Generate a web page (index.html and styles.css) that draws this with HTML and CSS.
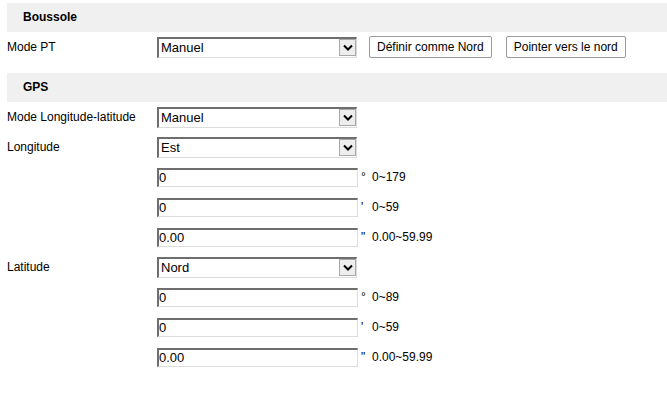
FILE: index.html
```html
<!DOCTYPE html>
<html lang="fr">
<head>
    <meta charset="UTF-8">
    <title>Boussole / GPS</title>
    <link rel="stylesheet" href="styles.css">
</head>
<body>
    <div class="section-title">Boussole</div>
    <div class="row">
        <label class="label">Mode PT</label>
        <span class="select-wrap">
            <select class="select"><option>Manuel</option></select>
            <span class="arrow"><svg width="10" height="7" viewBox="0 0 10 7"><path d="M1 1.5 L5 5.5 L9 1.5" fill="none" stroke="#000" stroke-width="2"/></svg></span>
        </span>
        <button class="btn btn-first">Définir comme Nord</button>
        <button class="btn">Pointer vers le nord</button>
    </div>

    <div class="section-title gap">GPS</div>
    <div class="row">
        <label class="label">Mode Longitude-latitude</label>
        <span class="select-wrap">
            <select class="select"><option>Manuel</option></select>
            <span class="arrow"><svg width="10" height="7" viewBox="0 0 10 7"><path d="M1 1.5 L5 5.5 L9 1.5" fill="none" stroke="#000" stroke-width="2"/></svg></span>
        </span>
    </div>
    <div class="row">
        <label class="label">Longitude</label>
        <span class="select-wrap">
            <select class="select"><option>Est</option></select>
            <span class="arrow"><svg width="10" height="7" viewBox="0 0 10 7"><path d="M1 1.5 L5 5.5 L9 1.5" fill="none" stroke="#000" stroke-width="2"/></svg></span>
        </span>
    </div>
    <div class="row">
        <span class="label"></span>
        <input class="text" type="text" value="0">
        <span class="unit">°</span><span class="range">0~179</span>
    </div>
    <div class="row">
        <span class="label"></span>
        <input class="text" type="text" value="0">
        <span class="unit">'</span><span class="range">0~59</span>
    </div>
    <div class="row">
        <span class="label"></span>
        <input class="text" type="text" value="0.00">
        <span class="unit">"</span><span class="range">0.00~59.99</span>
    </div>
    <div class="row">
        <label class="label">Latitude</label>
        <span class="select-wrap">
            <select class="select"><option>Nord</option></select>
            <span class="arrow"><svg width="10" height="7" viewBox="0 0 10 7"><path d="M1 1.5 L5 5.5 L9 1.5" fill="none" stroke="#000" stroke-width="2"/></svg></span>
        </span>
    </div>
    <div class="row">
        <span class="label"></span>
        <input class="text" type="text" value="0">
        <span class="unit">°</span><span class="range">0~89</span>
    </div>
    <div class="row">
        <span class="label"></span>
        <input class="text" type="text" value="0">
        <span class="unit">'</span><span class="range">0~59</span>
    </div>
    <div class="row">
        <span class="label"></span>
        <input class="text" type="text" value="0.00">
        <span class="unit">"</span><span class="range">0.00~59.99</span>
    </div>
</body>
</html>
```

FILE: styles.css
```css
body {
    margin: 0;
    padding: 3px 0 0 7px;
    font-family: "Liberation Sans", Arial, sans-serif;
    font-size: 12px;
    color: #000;
    background-color: #fff;
}

.section-title {
    height: 29px;
    line-height: 29px;
    padding-left: 16px;
    background-color: #f0f0f0;
    font-weight: bold;
}

.section-title.gap {
    margin-top: 11px;
}

.row {
    display: flex;
    align-items: center;
    height: 30px;
}

.label {
    width: 150px;
    flex-shrink: 0;
}

.select-wrap {
    position: relative;
    display: inline-block;
    width: 200px;
    height: 21px;
}

.select {
    appearance: none;
    -webkit-appearance: none;
    box-sizing: border-box;
    width: 200px;
    height: 21px;
    margin: 0;
    padding: 0 0 0 2px;
    font-family: "Liberation Sans", Arial, sans-serif;
    font-size: 13px;
    color: #000;
    background-color: #fff;
    border-top: 2px solid #6e6e6e;
    border-left: 2px solid #6e6e6e;
    border-right: 1px solid #dcdcdc;
    border-bottom: 1px solid #dcdcdc;
    border-radius: 0;
    outline: none;
}

.arrow {
    position: absolute;
    right: 1px;
    top: 2px;
    box-sizing: border-box;
    width: 17px;
    height: 17px;
    background-color: #ededed;
    border: 1px solid #a8a8a8;
    display: flex;
    align-items: center;
    justify-content: center;
    pointer-events: none;
}

.btn {
    box-sizing: border-box;
    height: 22px;
    margin: 0 0 0 14px;
    padding: 0 7px;
    font-family: "Liberation Sans", Arial, sans-serif;
    font-size: 12px;
    color: #000;
    background-color: #fff;
    border: 1px solid #9a9a9a;
    border-radius: 2px;
}

.btn.btn-first {
    margin-left: 12px;
}

.text {
    box-sizing: border-box;
    width: 201px;
    height: 19px;
    margin: 0;
    padding: 0;
    font-family: "Liberation Sans", Arial, sans-serif;
    font-size: 13px;
    color: #000;
    border-top: 2px solid #6e6e6e;
    border-left: 2px solid #6e6e6e;
    border-right: 1px solid #dcdcdc;
    border-bottom: 1px solid #dcdcdc;
    border-radius: 0;
    outline: none;
}

.unit {
    width: 14px;
    padding-left: 3px;
    box-sizing: border-box;
}

.range {
    font-size: 12px;
}
```
